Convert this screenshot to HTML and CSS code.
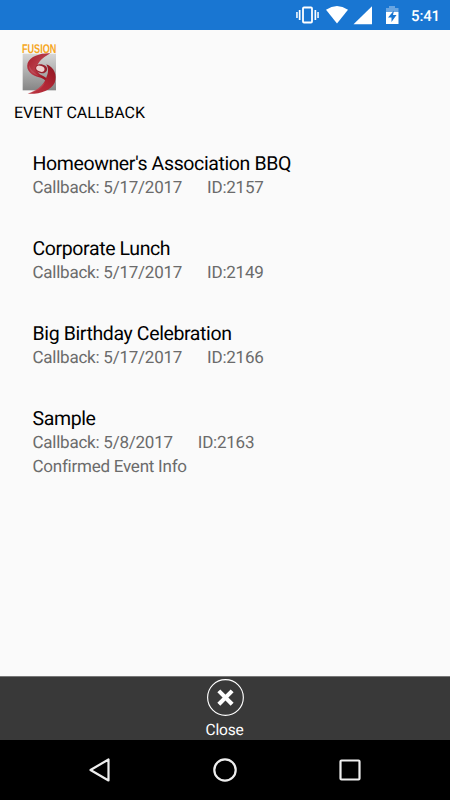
FILE: index.html
```html
<!DOCTYPE html>
<html lang="en">
<head>
<meta charset="utf-8">
<title>Event Callback</title>
<link rel="stylesheet" href="styles.css">
</head>
<body>
<div class="screen">
  <header class="status">
    <svg class="status-icons" viewBox="0 0 110 30" fill="#fff">
      <rect x="13" y="7.500" width="9" height="15" rx="1" fill="none" stroke="#fff" stroke-width="1.800"/>
      <path d="M8.800 10h1.700v10H8.800zM6.200 12h1.500v6H6.200zM24.500 10h1.700v10h-1.700zM27.300 12h1.500v6h-1.500z"/>
      <path d="M36 9.700Q47 2.300 58 9.700L47 23.500z"/>
      <path d="M82 6v18H63.500z" transform="translate(0 .2)"/>
      <path d="M96 8h3V6h6v2h3.500v4H96z" opacity=".35"/>
      <path d="M96 12h12.500v12H96z"/>
      <path d="M104 10.500L98 17.500h3.500v4.500L106.500 15h-3.500z" fill="#1976d2"/>
    </svg>
    <span class="time">5:41</span>
  </header>
  <main class="content">
    <svg class="logo" viewBox="0 0 108 159">
      <defs>
        <linearGradient id="gray" x1="0" y1="0" x2="0" y2="1"><stop offset="0" stop-color="#d6d6d6"/><stop offset="1" stop-color="#858585"/></linearGradient>
        <linearGradient id="upper" x1="0" y1="0" x2="1" y2="1"><stop offset="0" stop-color="#a51c2b"/><stop offset=".4" stop-color="#b83a47"/><stop offset=".7" stop-color="#a31927"/><stop offset="1" stop-color="#8c1220"/></linearGradient>
        <linearGradient id="lower" x1="0" y1="1" x2="1" y2="0"><stop offset="0" stop-color="#ba3440"/><stop offset=".5" stop-color="#b02634"/><stop offset="1" stop-color="#8d1420"/></linearGradient>
      </defs>
      <rect x="5" y="32" width="100" height="110" fill="url(#gray)"/>
      <text x="3" y="30" class="brand" textLength="103" lengthAdjust="spacingAndGlyphs">FUSION</text>
      <path d="M88 31C58 30 28 40 20 60C13 84 34 98 54 103C69 107 79 114 80 128C85 114 79 104 62 97C50 91 44 80 49 67C55 52 72 40 88 31z" fill="url(#upper)"/>
      <path d="M24 66C22 82 36 93 54 99C45 92 31 84 24 66z" fill="#c25a65" opacity=".6"/>
      <path d="M43 77C42 63 61 60 74 69C83 77 77 92 62 91C52 89 45 85 43 77z" fill="#99202d"/>
      <path d="M76 64C99 73 110 96 101 119C90 143 55 154 20 152C43 146 62 132 71 115C78 99 87 84 76 64z" fill="url(#lower)"/>
      <path d="M21 151C45 143 60 130 72 117C68 134 46 148 21 151z" fill="#d06870" opacity=".35"/>
      <ellipse cx="58" cy="77" rx="13" ry="8.500" fill="#efd1d0" transform="rotate(22 58 77)"/>
    </svg>
    <h1 class="heading">EVENT CALLBACK</h1>
    <ul class="events">
      <li class="event"><h2>Homeowner's Association BBQ</h2><p><span>Callback: 5/17/2017</span><span>ID:2157</span></p></li>
      <li class="event"><h2>Corporate Lunch</h2><p><span>Callback: 5/17/2017</span><span>ID:2149</span></p></li>
      <li class="event"><h2>Big Birthday Celebration</h2><p><span>Callback: 5/17/2017</span><span>ID:2166</span></p></li>
      <li class="event"><h2>Sample</h2><p><span>Callback: 5/8/2017</span><span>ID:2163</span></p><p>Confirmed Event Info</p></li>
    </ul>
  </main>
  <footer class="toolbar">
    <svg class="close-icon" viewBox="0 0 40 40" fill="none" stroke="#fff">
      <circle cx="20.500" cy="19.500" r="18.800" stroke-width="1.200"/>
      <path d="M13.500 12.500L27.500 26.500M27.500 12.500L13.500 26.500" stroke-width="4.400"/>
    </svg>
    <span class="close-label">Close</span>
  </footer>
  <nav class="nav">
    <svg viewBox="0 0 26 26"><path d="M21.500 2.500v21L3.500 13z"/></svg>
    <svg viewBox="0 0 26 26"><circle cx="13" cy="13" r="10.700"/></svg>
    <svg viewBox="0 0 26 26"><rect x="3.500" y="3.500" width="19" height="19" rx="1"/></svg>
  </nav>
</div>
</body>
</html>
```
FILE: styles.css
```css
* { box-sizing: border-box; margin: 0; padding: 0; }
body { font-family: Roboto, "Liberation Sans", sans-serif; background: #fafafa; text-rendering: geometricPrecision; }
svg { display: block; }
.screen { width: 450px; height: 800px; display: flex; flex-direction: column; overflow: hidden; }
.status { height: 30px; background: #1976d2; color: #fff; display: flex; justify-content: flex-end; align-items: center; padding-right: 10px; }
.status-icons { width: 110px; height: 30px; margin-right: 11px; }
.time { width: 29px; font-size: 15px; font-weight: 500; line-height: 30px; padding-top: 1px; letter-spacing: -0.15px; white-space: nowrap; }
.content { flex: 1; padding-top: 13px; }
.logo { width: 36px; height: 53px; margin-left: 21px; overflow: visible; }
.brand { font-family: "Liberation Sans", sans-serif; font-weight: 700; font-size: 38px; fill: #f5a623; }
.heading { margin: 7px 0 0 14px; font-size: 16px; line-height: 20px; letter-spacing: -0.05px; font-weight: 400; color: #000; }
.events { list-style: none; padding: 27px 0 0 32.5px; }
.event { height: 85px; }
.event h2 { font-size: 19.5px; line-height: 27px; letter-spacing: -0.38px; font-weight: 400; color: #000; }
.event p { display: flex; gap: 25px; font-size: 17px; line-height: 23.5px; letter-spacing: -0.24px; color: #6b6b6b; }
.toolbar { height: 64px; background: #393939; border-top: 1px solid #777; color: #fff; display: flex; flex-direction: column; align-items: center; padding-top: 2px; }
.close-icon { width: 40px; height: 40px; }
.close-label { font-size: 15.5px; line-height: 20px; margin-top: 3px; margin-right: 1px; letter-spacing: -0.2px; }
.nav { height: 60px; background: #000; display: flex; justify-content: space-between; padding: 17px 87px 0; }
.nav svg { width: 26px; height: 26px; fill: none; stroke: #eee; stroke-width: 2.2; stroke-linejoin: round; }
```
